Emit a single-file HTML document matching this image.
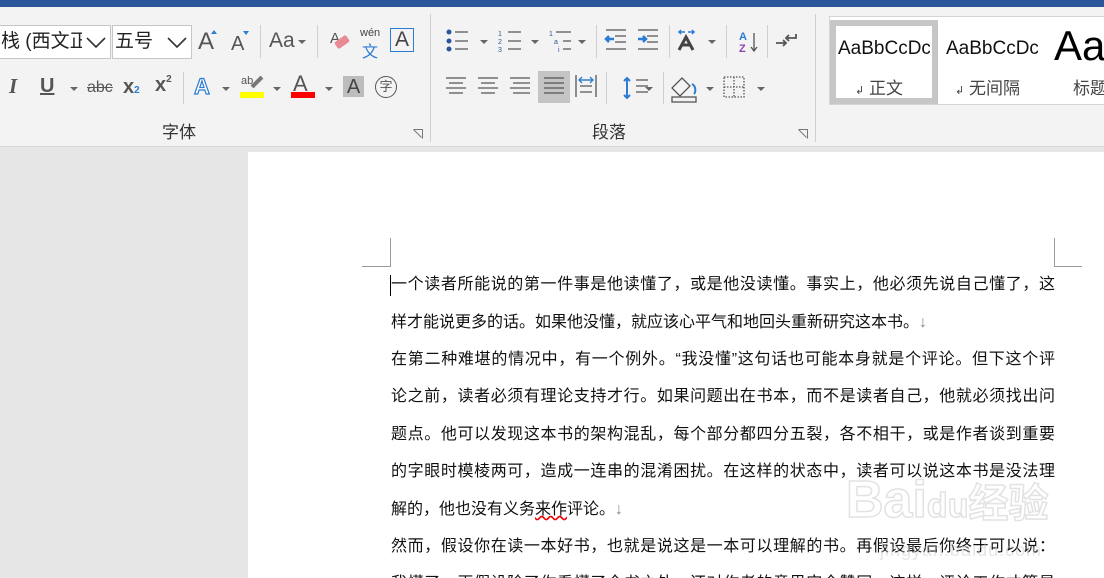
<!DOCTYPE html>
<html style="width:1104px;height:578px;overflow:hidden"><head><meta charset="utf-8"><style>
*{margin:0;padding:0;box-sizing:border-box}
body{width:1104px;height:578px;overflow:hidden;position:relative;background:#e6e6e6;font-family:"Liberation Sans","Noto Sans CJK SC",sans-serif}
.abs{position:absolute}
#top{left:0;top:0;width:1104px;height:7px;background:#2b579a}
#rib{left:0;top:7px;width:1104px;height:140px;background:#f3f3f3;border-bottom:1px solid #d5d5d5}
.sep{position:absolute;width:1px;background:#d0d0d0}
.combo{position:absolute;background:#fff;border:1px solid #c6c6c6;height:34px;top:25px;font-size:19px;color:#222;line-height:32px;padding-left:2px;overflow:hidden;white-space:nowrap}
.ic{position:absolute;color:#555;font-size:22px;line-height:1}
.dd{position:absolute;width:0;height:0;border-left:4px solid transparent;border-right:4px solid transparent;border-top:4px solid #666}
.lbl{position:absolute;top:122px;font-size:17px;color:#333;line-height:22px}
#page{left:248px;top:152px;width:856px;height:426px;background:#fff}
.ln{position:absolute;left:391px;width:664px;font-size:16px;color:#111;text-align:justify;text-align-last:justify;white-space:nowrap;height:22px;line-height:22px;overflow:hidden}
.ln.s{text-align-last:left}
</style></head><body>
<div id="top" class="abs"></div>
<div id="rib" class="abs"></div>
<div class="combo" style="left:-2px;width:113px">栈 (西文正文<span class="abs" style="right:0;top:0;width:28px;height:32px;background:#fff"></span><svg class="abs" style="right:4px;top:11px" width="20" height="12"><path d="M1 1l9 9 9-9" fill="none" stroke="#333" stroke-width="1.6"/></svg></div>
<div class="combo" style="left:112px;width:80px">五号<svg class="abs" style="right:4px;top:11px" width="20" height="12"><path d="M1 1l9 9 9-9" fill="none" stroke="#333" stroke-width="1.6"/></svg></div>
<div class="ic" style="left:198px;top:30px;font-size:24px">A</div><div class="abs" style="left:211px;top:30px;border-left:3px solid transparent;border-right:3px solid transparent;border-bottom:4px solid #2b7cd3"></div>
<div class="ic" style="left:231px;top:34px;font-size:20px">A</div><div class="abs" style="left:243px;top:31px;border-left:3px solid transparent;border-right:3px solid transparent;border-top:4px solid #2b7cd3"></div>
<div class="sep" style="left:260px;top:25px;height:33px"></div>
<div class="ic" style="left:269px;top:30px;font-size:21px">Aa</div><div class="dd" style="left:298px;top:40px"></div>
<div class="sep" style="left:317px;top:25px;height:33px"></div>
<div class="ic" style="left:330px;top:31px;font-size:15px">A</div><div class="abs" style="left:335px;top:38px;width:14px;height:8px;background:#e88a93;transform:rotate(-35deg);border-radius:2px"></div>
<div class="abs" style="left:360px;top:27px;font-size:11px;color:#444">wén</div><div class="abs" style="left:362px;top:38px;font-size:16px;color:#2b7cd3">文</div>
<div class="abs" style="left:390px;top:28px;width:24px;height:24px;border:1px solid #2b7cd3;font-size:21px;color:#444;text-align:center;line-height:22px">A</div>
<div class="ic" style="left:9px;top:76px;font-style:italic;font-family:'Liberation Serif',serif;font-weight:bold;font-size:21px">I</div>
<div class="ic" style="left:40px;top:76px;font-size:20px;text-decoration:underline;font-weight:bold">U</div><div class="dd" style="left:70px;top:87px"></div>
<div class="ic" style="left:87px;top:80px;font-size:16px;text-decoration:line-through">abc</div>
<div class="ic" style="left:123px;top:77px;font-size:20px;font-weight:bold">x<span style="font-size:10px;color:#2b7cd3">2</span></div>
<div class="ic" style="left:155px;top:75px;font-size:20px;font-weight:bold">x<span style="font-size:10px;vertical-align:top">2</span></div>
<div class="sep" style="left:183px;top:72px;height:32px"></div>
<div class="ic" style="left:194px;top:76px;font-size:22px;color:#fff;-webkit-text-stroke:1.2px #2b7cd3;font-weight:bold">A</div><div class="dd" style="left:222px;top:87px"></div>
<div class="abs" style="left:241px;top:75px;font-size:11px;color:#555">ab</div><div class="abs" style="left:250px;top:80px;width:14px;height:4px;background:#777;transform:rotate(-45deg)"></div><div class="abs" style="left:240px;top:92px;width:24px;height:6px;background:#ffff00"></div><div class="dd" style="left:273px;top:87px"></div>
<div class="ic" style="left:293px;top:73px;font-size:22px">A</div><div class="abs" style="left:291px;top:92px;width:24px;height:6px;background:#f00"></div><div class="dd" style="left:325px;top:87px"></div>
<div class="abs" style="left:343px;top:76px;width:21px;height:21px;background:#bdbdbd;font-size:20px;color:#444;text-align:center;line-height:22px">A</div>
<div class="abs" style="left:375px;top:76px;width:22px;height:22px;border:1.5px solid #555;border-radius:50%;font-size:13px;color:#555;text-align:center;line-height:19px">字</div>
<div class="lbl" style="left:162px">字体</div>
<svg class="abs" style="left:413px;top:129px" width="10" height="10"><path d="M0.5 0.5h9v9M0.5 0.5l8 8" fill="none" stroke="#777"/></svg>
<div class="sep" style="left:430px;top:14px;height:128px"></div>
<svg class="abs" style="left:446px;top:28px" width="380" height="75" fill="none" stroke="#555" stroke-width="1.3">
<g fill="#2b579a" stroke="none"><circle cx="3" cy="4" r="2.5"/><circle cx="3" cy="13" r="2.5"/><circle cx="3" cy="21" r="2.5"/></g>
<path d="M9 4h13M9 13h13M9 21h13"/>
<path d="M62 4h13M62 13h13M62 21h13"/>
<text x="52" y="8" font-size="7" fill="#2b579a" stroke="none">1</text><text x="52" y="16" font-size="7" fill="#2b579a" stroke="none">2</text><text x="52" y="24" font-size="7" fill="#2b579a" stroke="none">3</text>
<text x="103" y="8" font-size="7" fill="#2b579a" stroke="none">1</text><text x="108" y="16" font-size="7" fill="#2b579a" stroke="none">a</text><text x="112" y="24" font-size="7" fill="#2b579a" stroke="none">i</text>
<path d="M110 4h15M117 13h8M117 21h8"/>
<path d="M160 2h20M169 8h11M169 14h11M160 21h20M192 2h20M201 8h11M201 14h11M192 21h20"/>
<path d="M168 11h-8M163 8l-3 3 3 3M192 11h8M197 8l3 3-3 3" stroke="#2b7cd3" stroke-width="2.5"/>
<path d="M233 22l7-13 7 13M236 17h8" stroke="#444" stroke-width="3"/>
<path d="M233 4h6M242 4h6M235 2l-2 2 2 2M246 2l2 2-2 2" stroke="#2b7cd3" stroke-width="1.5"/>
<text x="293" y="12" font-size="11" fill="#2b7cd3" stroke="none" font-weight="bold">A</text><text x="293" y="24" font-size="11" fill="#8e44ad" stroke="none" font-weight="bold">Z</text><path d="M308 5v18M305 19l3 4 3-4"/>
<path d="M350 6v4h-10M343 7l-3 3 3 3M330 15h10M337 12l3 3-3 3" stroke="#555" stroke-width="1.8"/>
<path d="M0 50h20M3 55h14M0 60h20M3 65h14M32 50h20M35 55h14M32 60h20M35 65h14M64 50h20M67 55h17M64 60h20M67 65h17"/>
<rect x="92" y="43" width="32" height="32" fill="#c4c4c4" stroke="none"/>
<path d="M98 50h20M98 55h20M98 60h20M98 65h20"/>
<path d="M130 47v22M150 47v22M134 52h12M134 58h12M134 64h12"/><path d="M133 52h14M136 49l-3 3 3 3M144 49l3 3-3 3" stroke="#2b7cd3"/>
<path d="M181 50v20M178 53l3-3 3 3M178 67l3 3 3-3" stroke="#2b7cd3" stroke-width="2"/><path d="M190 52h12M190 58h12M190 64h12"/>
<path d="M226 60l10-10 8 8-10 10z"/><rect x="226" y="69" width="24" height="5"/><path d="M246 56c4 2 4 8 2 10" stroke="#2b7cd3" stroke-width="2"/>
<path d="M278 49h20v20h-20zM288 49v20M278 59h20" stroke-dasharray="1.5 1.5"/>
</svg>
<div class="dd" style="left:480px;top:40px"></div><div class="dd" style="left:531px;top:40px"></div><div class="dd" style="left:578px;top:40px"></div><div class="dd" style="left:708px;top:40px"></div>
<div class="dd" style="left:645px;top:87px"></div><div class="dd" style="left:706px;top:87px"></div><div class="dd" style="left:757px;top:87px"></div>
<div class="sep" style="left:596px;top:25px;height:33px"></div><div class="sep" style="left:669px;top:25px;height:33px"></div><div class="sep" style="left:726px;top:25px;height:33px"></div><div class="sep" style="left:767px;top:25px;height:33px"></div>
<div class="sep" style="left:606px;top:72px;height:32px"></div><div class="sep" style="left:663px;top:72px;height:32px"></div>
<div class="lbl" style="left:592px">段落</div>
<svg class="abs" style="left:798px;top:129px" width="10" height="10"><path d="M0.5 0.5h9v9M0.5 0.5l8 8" fill="none" stroke="#777"/></svg>
<div class="sep" style="left:815px;top:14px;height:128px"></div>
<div class="abs" style="left:829px;top:16px;width:280px;height:89px;background:#fff;border:1px solid #d4d4d4"></div>
<div class="abs" style="left:830px;top:20px;width:108px;height:84px;border:6px solid #c6c6c6"></div>
<div class="abs" style="left:838px;top:38px;font-size:19px;color:#111;width:92px;overflow:hidden;white-space:nowrap">AaBbCcDc</div>
<div class="abs" style="left:855px;top:74px;font-size:17px;color:#444;white-space:nowrap"><span style="font-size:11px">↲</span> 正文</div>
<div class="abs" style="left:946px;top:38px;font-size:19px;color:#111;width:92px;overflow:hidden;white-space:nowrap">AaBbCcDc</div>
<div class="abs" style="left:955px;top:74px;font-size:17px;color:#444;white-space:nowrap"><span style="font-size:11px">↲</span> 无间隔</div>
<div class="abs" style="left:1054px;top:22px;font-size:42px;color:#000;white-space:nowrap">Aa</div>
<div class="abs" style="left:1073px;top:74px;font-size:17px;color:#444;white-space:nowrap">标题</div>
<div id="page" class="abs"></div>
<svg class="abs" style="left:360px;top:238px" width="725" height="30" fill="none" stroke="#9a9a9a"><path d="M30.5 0v28.5H2M694.5 0v28.5H722"/></svg>
<div class="abs" style="left:390px;top:275px;width:1px;height:21px;background:#000"></div>
<div class="ln" style="top:274px">一个读者所能说的第一件事是他读懂了，或是他没读懂。事实上，他必须先说自己懂了，这</div>
<div class="ln s" style="top:312px">样才能说更多的话。如果他没懂，就应该心平气和地回头重新研究这本书。<span style="color:#888">↓</span></div>
<div class="ln" style="top:349px">在第二种难堪的情况中，有一个例外。“我没懂”这句话也可能本身就是个评论。但下这个评</div>
<div class="ln" style="top:386px">论之前，读者必须有理论支持才行。如果问题出在书本，而不是读者自己，他就必须找出问</div>
<div class="ln" style="top:424px">题点。他可以发现这本书的架构混乱，每个部分都四分五裂，各不相干，或是作者谈到重要</div>
<div class="ln" style="top:461px">的字眼时模棱两可，造成一连串的混淆困扰。在这样的状态中，读者可以说这本书是没法理</div>
<div class="ln s" style="top:499px">解的，他也没有义务<span style="text-decoration:underline wavy #e00">来作</span>评论。<span style="color:#888">↓</span></div>
<div class="ln" style="top:536px">然而，假设你在读一本好书，也就是说这是一本可以理解的书。再假设最后你终于可以说：</div>
<div class="ln" style="top:573px;height:5px">我懂了。再假设除了你看懂了全书之外，还对作者的意思完全赞同，这样，评论工作才算是</div>
<div class="abs" style="left:846px;top:470px;font-size:52px;font-weight:bold;color:transparent;-webkit-text-stroke:1.5px rgba(190,190,190,0.45);white-space:nowrap">Bai<span style="font-size:34px">du</span><span style="font-size:40px">经验</span></div>
<div class="abs" style="left:880px;top:540px;font-size:18px;color:rgba(200,200,200,0.45);letter-spacing:1px">jingyan.baidu.com</div>
</body></html>
